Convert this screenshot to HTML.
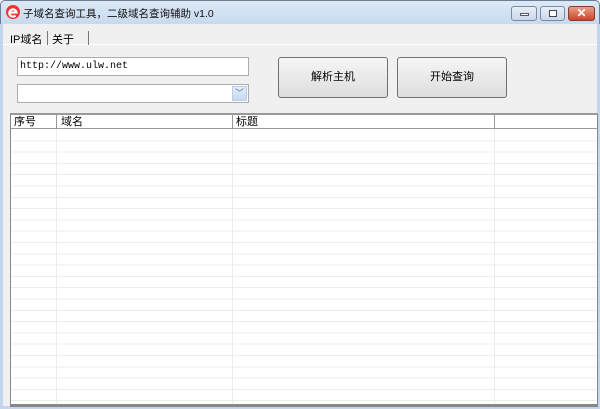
<!DOCTYPE html>
<html><head><meta charset="utf-8"><style>
*{margin:0;padding:0;box-sizing:border-box}
body{width:600px;height:409px;overflow:hidden;background:#f0f0f0;font-family:"Liberation Sans","Noto Sans CJK SC",sans-serif;font-size:12px;color:#000;position:relative}
.title{position:absolute;left:0;top:0;width:600px;height:24px;background:linear-gradient(#dce9f6,#c7daee);border:1px solid #6b7e95;border-bottom:none;border-radius:5px 5px 0 0}
.frame{position:absolute;left:0;top:24px;width:600px;height:385px;border-left:3px solid #c4d6eb;border-right:3px solid #c4d6eb;border-bottom:3px solid #c4d6eb}
.ttext{position:absolute;left:22px;top:5px;font-size:10.5px;color:#111}
.wb{position:absolute;top:5px;height:15px;border:1px solid #7a8ba0;border-radius:3px;background:linear-gradient(#e6eef8,#c9d8ea)}
.abs{position:absolute}
.btn{position:absolute;top:57px;width:110px;height:41px;border:1px solid #707070;border-radius:3px;background:linear-gradient(#f6f6f6,#dddddd);text-align:center;line-height:39px;font-size:11px}
.list{position:absolute;left:10px;top:113px;width:588px;height:294px;border:1px solid #828790;border-top:2px solid #999;border-bottom:3px solid #888;background:#fff;
background-image:repeating-linear-gradient(#fff 0 10.3px,#ececec 10.3px 11.3px);background-position:0 15px}
.hdr{position:absolute;left:0;top:0;width:100%;height:14px;background:#fff;border-bottom:1px solid #999}
.hdr span{position:absolute;top:0;font-size:11px;line-height:14px}
.vl{position:absolute;top:14px;bottom:0;width:1px;background:#ececec}
.hl{position:absolute;top:0;height:14px;width:1px;background:#999}
</style></head><body>
<div class="title">
<svg class="abs" style="left:4px;top:3px" width="16" height="16" viewBox="0 0 16 16"><circle cx="8" cy="8" r="7" fill="#e33"/><path d="M4 8.5h7.5A3.6 3.6 0 1 0 10.5 11.5" stroke="#fff" stroke-width="2.2" fill="none"/></svg>
<div class="ttext">子域名查询工具，二级域名查询辅助 v1.0</div>
<div class="wb" style="left:510px;width:26px"><div class="abs" style="left:8px;top:6px;width:9px;height:3px;background:#fff;border:1px solid #556"></div></div>
<div class="wb" style="left:539px;width:25px"><div class="abs" style="left:8px;top:3px;width:8px;height:7px;border:1px solid #445;background:#fff"></div></div>
<div class="wb" style="left:567px;width:27px;background:linear-gradient(#e8a08a,#c9452c);border-color:#8a3a2a;color:#fff;font-weight:bold;text-align:center;line-height:13px;font-size:12px">✕</div>
</div>
<div class="frame"></div>
<div class="abs" style="left:3px;top:44px;width:594px;height:1px;background:#fff"></div>
<div class="abs" style="left:10px;top:31px;font-size:11px">IP域名</div>
<div class="abs" style="left:47px;top:31px;width:1px;height:14px;background:#777"></div>
<div class="abs" style="left:52px;top:31px;font-size:11px">关于</div>
<div class="abs" style="left:88px;top:31px;width:1px;height:14px;background:#777"></div>
<div class="abs" style="left:17px;top:57px;width:232px;height:19px;border:1px solid #abadb3;background:#fff;font-family:'Liberation Mono',monospace;font-size:10px;line-height:17px;padding-left:2px">http://www.ulw.net</div>
<div class="abs" style="left:17px;top:84px;width:232px;height:19px;border:1px solid #abadb3;background:#fff">
<div class="abs" style="right:1px;top:1px;width:15px;height:15px;background:linear-gradient(#e4eefa,#c6d9f0);border:1px solid #b8cde6;color:#4d6b94;font-size:9px;text-align:center;line-height:13px">﹀</div></div>
<div class="btn" style="left:278px">解析主机</div>
<div class="btn" style="left:397px">开始查询</div>
<div class="list">
<div class="vl" style="left:45px"></div><div class="vl" style="left:221px"></div><div class="vl" style="left:483px"></div>
<div class="hdr">
<span style="left:3px">序号</span><div class="hl" style="left:45px"></div>
<span style="left:50px">域名</span><div class="hl" style="left:221px"></div>
<span style="left:225px">标题</span><div class="hl" style="left:483px"></div>
</div>
</div>
</body></html>
